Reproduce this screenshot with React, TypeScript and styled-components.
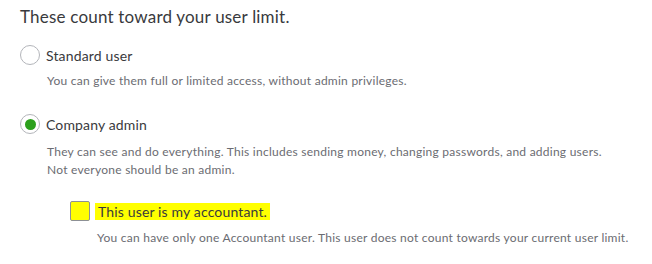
import React from "react";
import styled, { createGlobalStyle } from "styled-components";

const Global = createGlobalStyle`
  body {
    margin: 0;
    background: #ffffff;
    font-family: "Lato", "Open Sans", sans-serif;
    color: #393a3d;
  }
`;

const Page = styled.div`
  padding: 4px 20px 0 20px;
  display: flex;
  flex-direction: column;
`;

const Title = styled.h2`
  margin: 0;
  font-size: 17px;
  font-weight: 400;
  line-height: 26px;
  letter-spacing: 0.2px;
  color: #393a3d;
`;

const OptionGroup = styled.div<{ $top: number }>`
  display: flex;
  flex-direction: column;
  margin-top: ${(p) => p.$top}px;
`;

const OptionRow = styled.label`
  display: flex;
  align-items: center;
  gap: 6px;
  height: 22px;
`;

const Radio = styled.span<{ $checked?: boolean }>`
  width: 20px;
  height: 20px;
  box-sizing: border-box;
  border-radius: 50%;
  border: 1px solid #b3b5ba;
  background: #fff;
  display: flex;
  align-items: center;
  justify-content: center;
  flex: none;
  &::after {
    content: "";
    display: ${(p) => (p.$checked ? "block" : "none")};
    width: 11px;
    height: 11px;
    border-radius: 50%;
    background: #2ca01c;
  }
`;

const OptionLabel = styled.span`
  font-size: 14px;
  letter-spacing: 0.15px;
  color: #393a3d;
`;

const Description = styled.p<{ $indent: number; $top: number }>`
  margin: ${(p) => p.$top}px 0 0 ${(p) => p.$indent}px;
  font-size: 12px;
  line-height: 18px;
  letter-spacing: 0.25px;
  color: #6b6c72;
`;

const CheckRow = styled.label`
  display: flex;
  align-items: center;
  gap: 5px;
  margin: 22px 0 0 50px;
`;

const Checkbox = styled.span`
  width: 20px;
  height: 20px;
  box-sizing: border-box;
  border: 1px solid #8d9096;
  border-radius: 2px;
  background: #ffff00;
  flex: none;
`;

const Highlight = styled.span`
  background: #ffff00;
  font-size: 14px;
  line-height: 17px;
  letter-spacing: 0.15px;
  padding: 0 3px;
  color: #393a3d;
`;

export default function App() {
  return (
    <>
      <Global />
      <Page>
        <Title>These count toward your user limit.</Title>
        <OptionGroup $top={14}>
          <OptionRow>
            <Radio />
            <OptionLabel>Standard user</OptionLabel>
          </OptionRow>
          <Description $indent={27} $top={6}>
            You can give them full or limited access, without admin privileges.
          </Description>
        </OptionGroup>
        <OptionGroup $top={23}>
          <OptionRow>
            <Radio $checked />
            <OptionLabel>Company admin</OptionLabel>
          </OptionRow>
          <Description $indent={27} $top={8}>
            They can see and do everything. This includes sending money, changing passwords, and adding users.
            <br />
            Not everyone should be an admin.
          </Description>
          <CheckRow>
            <Checkbox />
            <Highlight>This user is my accountant.</Highlight>
          </CheckRow>
          <Description $indent={77} $top={8}>
            You can have only one Accountant user. This user does not count towards your current user limit.
          </Description>
        </OptionGroup>
      </Page>
    </>
  );
}
